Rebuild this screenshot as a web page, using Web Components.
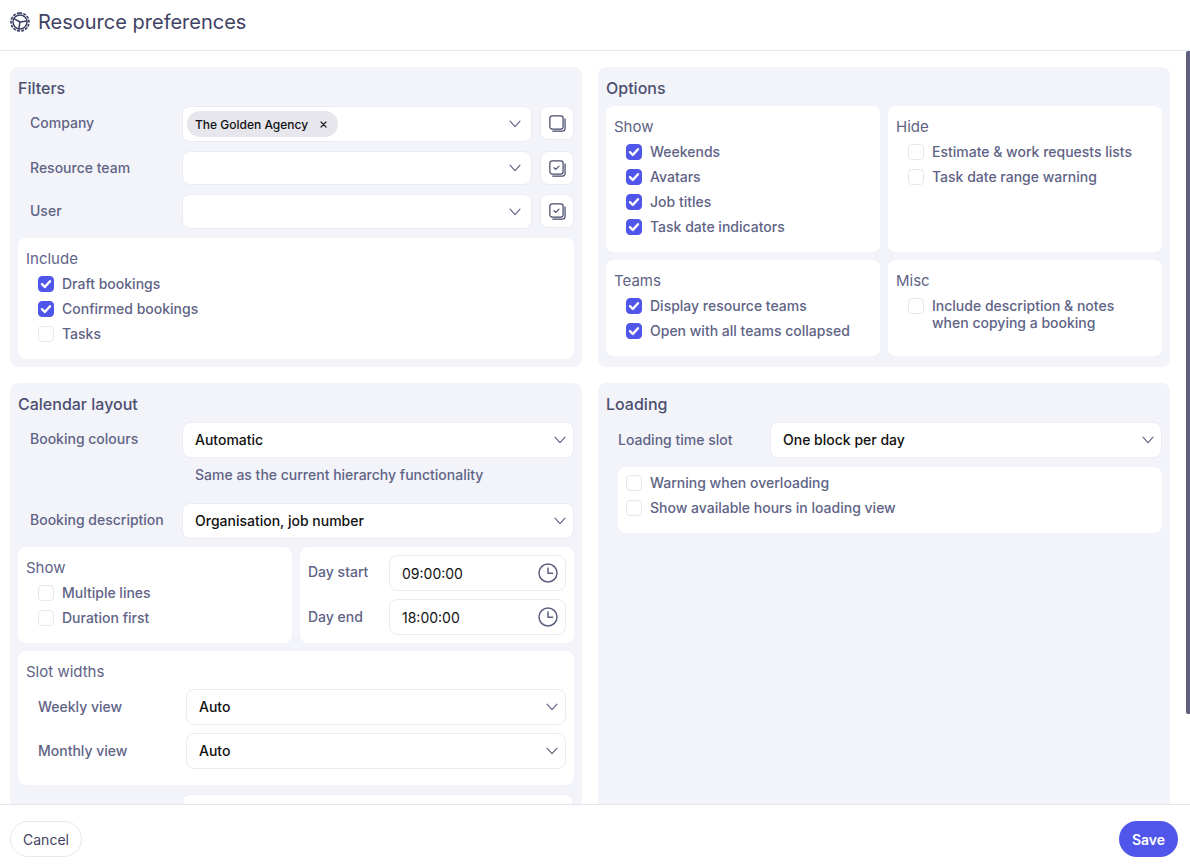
<!DOCTYPE html>
<html>
<head>
<meta charset="utf-8">
<title>Resource preferences</title>
<style>
  html, body { margin: 0; height: 100%; }
  body { font-family: Inter, "Liberation Sans", sans-serif; font-size: 14px; color: #5c5f7e; background: #fff; overflow: hidden; }
</style>
</head>
<body>
<prefs-page>
  <span slot="title">Resource preferences</span>

  <pref-panel slot="left" heading="Filters" style="height:300px">
    <pref-row label="Company" gap="9">
      <pref-select arrow="far" h="36"><pref-chip>The Golden Agency</pref-chip></pref-select>
      <pref-iconbtn></pref-iconbtn>
    </pref-row>
    <pref-row label="Resource team" gap="9">
      <pref-select arrow="far" h="34"></pref-select>
      <pref-iconbtn checked></pref-iconbtn>
    </pref-row>
    <pref-row label="User" gap="9">
      <pref-select arrow="far" h="35"></pref-select>
      <pref-iconbtn checked></pref-iconbtn>
    </pref-row>
    <pref-card heading="Include" style="height:121px">
      <pref-check checked>Draft bookings</pref-check>
      <pref-check checked>Confirmed bookings</pref-check>
      <pref-check>Tasks</pref-check>
    </pref-card>
  </pref-panel>

  <pref-panel slot="right" heading="Options" style="height:300px">
    <div style="display:grid;grid-template-columns:274px 274px;gap:8px;grid-template-rows:146px 96px">
      <pref-card heading="Show">
        <pref-check checked>Weekends</pref-check>
        <pref-check checked>Avatars</pref-check>
        <pref-check checked>Job titles</pref-check>
        <pref-check checked>Task date indicators</pref-check>
      </pref-card>
      <pref-card heading="Hide">
        <pref-check>Estimate &amp; work requests lists</pref-check>
        <pref-check>Task date range warning</pref-check>
      </pref-card>
      <pref-card heading="Teams">
        <pref-check checked>Display resource teams</pref-check>
        <pref-check checked>Open with all teams collapsed</pref-check>
      </pref-card>
      <pref-card heading="Misc">
        <pref-check>Include description &amp; notes<br>when copying a booking</pref-check>
      </pref-card>
    </div>
  </pref-panel>

  <pref-panel slot="left" heading="Calendar layout" style="height:508px">
    <pref-row label="Booking colours">
      <pref-select value="Automatic"></pref-select>
    </pref-row>
    <pref-hint>Same as the current hierarchy functionality</pref-hint>
    <pref-row label="Booking description">
      <pref-select value="Organisation, job number"></pref-select>
    </pref-row>
    <div style="display:grid;grid-template-columns:274px 274px;gap:8px">
      <pref-card heading="Show" style="height:96px">
        <pref-check>Multiple lines</pref-check>
        <pref-check>Duration first</pref-check>
      </pref-card>
      <pref-card style="height:96px" flush>
        <pref-time label="Day start" ptop="8" value="09:00:00"></pref-time>
        <pref-time label="Day end" ptop="9" value="18:00:00"></pref-time>
      </pref-card>
    </div>
    <pref-card heading="Slot widths" style="height:134px;margin-top:8px;margin-bottom:9px">
      <pref-row label="Weekly view" narrow style="margin-top:6px"><pref-select value="Auto"></pref-select></pref-row>
      <pref-row label="Monthly view" narrow><pref-select value="Auto"></pref-select></pref-row>
    </pref-card>
    <pref-row label="">
      <pref-select></pref-select>
    </pref-row>
  </pref-panel>

  <pref-panel slot="right" heading="Loading">
    <pref-row label="Loading time slot" ptop="9">
      <pref-select value="One block per day"></pref-select>
    </pref-row>
    <pref-card style="height:66px;padding-top:7px;margin:9px 0 0 12px">
      <pref-check flat>Warning when overloading</pref-check>
      <pref-check flat>Show available hours in loading view</pref-check>
    </pref-card>
  </pref-panel>
</prefs-page>

<script>
const CHEVRON = `<svg width="14" height="14" viewBox="0 0 14 14" fill="none" stroke="#5c5f7e" stroke-width="1.1" stroke-linecap="round" stroke-linejoin="round"><path d="M2 4.2 7 9.6 12 4.2"/></svg>`;

class PrefsPage extends HTMLElement {
  constructor() {
    super();
    this.attachShadow({ mode: "open" });
    this.shadowRoot.innerHTML = `
      <style>
        :host { display: flex; flex-direction: column; height: 868px; }
        header { flex: none; height: 44px; padding: 0 10px 6px; border-bottom: 1px solid #e6e6ef; display: flex; align-items: center; gap: 8px; }
        header svg { display: block; flex: none; }
        h1 { margin: 0; font-size: 20px; font-weight: 400; color: #3f4264; line-height: 28px; }
        .wrap { flex: 1; min-height: 0; position: relative; }
        main { height: 100%; overflow: hidden; padding: 16px 0 16px 10px; box-sizing: border-box; }
        .thumb { position: absolute; top: 0; right: 0; width: 4px; height: 663px; background: #5f6080; border-radius: 2px 0 0 2px; }
        .cols { display: grid; grid-template-columns: 572px 572px; gap: 16px; }
        footer { flex: none; height: 64px; border-top: 1px solid #e6e6ef; display: flex; align-items: center; justify-content: space-between; padding: 5px 12px 0 10px; box-sizing: border-box; }
        button { font: inherit; height: 36px; border-radius: 18px; cursor: pointer; }
        .cancel { background: #fff; border: 1px solid #e6e6ef; color: #3f4264; width: 72px; padding: 0; }
        .save { background: #5056ea; border: 0; color: #fff; font-weight: 600; width: 59px; padding: 0; }
      </style>
      <header>
        <svg width="20" height="20" viewBox="0 0 20 20" fill="none" stroke="#3f4264" stroke-width="1.5" stroke-linecap="round">
          <circle cx="10" cy="10" r="7"/>
          <path d="M10 10 3.8 6.6M10 10 17 9M10 10 8.8 17"/>
          <path stroke-width="1.7" stroke-dasharray="1.5 2.6" d="M10 1a9 9 0 1 1-.01 0"/>
        </svg>
        <h1><slot name="title"></slot></h1>
      </header>
      <div class="wrap">
        <main><div class="cols"><slot name="left"></slot><slot name="right"></slot></div></main>
        <div class="thumb"></div>
      </div>
      <footer><button class="cancel">Cancel</button><button class="save">Save</button></footer>`;
  }
  connectedCallback() {
    // pair panels row by row: first left+right, then second left+right
    const left = [...this.querySelectorAll('[slot="left"]')];
    const right = [...this.querySelectorAll('[slot="right"]')];
    left.forEach((el, i) => {
      el.style.gridColumn = "1"; el.style.gridRow = String(i + 1);
      right[i].style.gridColumn = "2"; right[i].style.gridRow = String(i + 1);
    });
    this.shadowRoot.querySelector(".cols").querySelectorAll("slot").forEach(s => s.style.display = "contents");
  }
}

class PrefPanel extends HTMLElement {
  constructor() {
    super();
    this.attachShadow({ mode: "open" });
  }
  connectedCallback() {
    this.shadowRoot.innerHTML = `
      <style>
        :host { display: block; background: #f3f4fa; border-radius: 8px; padding: 10px 8px 8px; box-sizing: border-box; }
        h2 { margin: 0 0 7px; font-size: 16px; font-weight: 500; line-height: 22px; color: #4c4f70; }
      </style>
      <h2>${this.getAttribute("heading")}</h2>
      <slot></slot>`;
  }
}

class PrefCard extends HTMLElement {
  constructor() {
    super();
    this.attachShadow({ mode: "open" });
  }
  connectedCallback() {
    const h = this.getAttribute("heading");
    this.shadowRoot.innerHTML = `
      <style>
        :host { display: block; background: #fff; border-radius: 8px; padding: ${this.hasAttribute("flush") ? "8px" : "11px 8px 8px"}; box-sizing: border-box; }
        h3 { margin: 0 0 5px; font-size: 15px; font-weight: 420; line-height: 20px; padding-bottom: 1px; color: #606385; }
      </style>
      ${h ? `<h3>${h}</h3>` : ""}
      <slot></slot>`;
  }
}

class PrefRow extends HTMLElement {
  constructor() {
    super();
    this.attachShadow({ mode: "open" });
  }
  connectedCallback() {
    const narrow = this.hasAttribute("narrow");
    const ptop = this.getAttribute("ptop") || (narrow ? 9 : 8);
    this.shadowRoot.innerHTML = `
      <style>
        :host { display: flex; gap: 8px; margin-bottom: ${this.getAttribute("gap") || 8}px; align-items: flex-start; }
        label { flex: none; width: ${narrow ? 140 : 144}px; padding: ${ptop}px 0 0 12px; font-size: 14px; font-weight: 450; line-height: 17px; color: #606385; }
        ::slotted(pref-select) { flex: 1; min-width: 0; }
      </style>
      <label>${this.getAttribute("label")}</label>
      <slot></slot>`;
  }
}

class PrefSelect extends HTMLElement {
  constructor() {
    super();
    this.attachShadow({ mode: "open" });
  }
  connectedCallback() {
    const far = this.getAttribute("arrow") === "far";
    const value = this.getAttribute("value") || "";
    this.shadowRoot.innerHTML = `
      <style>
        :host { display: block; }
        .box { height: ${this.getAttribute("h") || 36}px; box-sizing: border-box; background: #fff; border: 1px solid #ebebf3; border-radius: 8px; display: flex; align-items: center; padding: 0 ${far ? 9 : 6}px 0 ${value ? 12 : 4}px; }
        .val { flex: 1; min-width: 0; color: #111; font-size: 14px; font-weight: 480; ${value ? "padding-bottom: 2px;" : ""} }
        svg { flex: none; display: block; }
      </style>
      <div class="box"><div class="val">${value}<slot></slot></div>${CHEVRON}</div>`;
  }
}

class PrefChip extends HTMLElement {
  constructor() {
    super();
    this.attachShadow({ mode: "open" });
    this.shadowRoot.innerHTML = `
      <style>
        :host { display: inline-flex; align-items: center; height: 26px; background: #e6e6ec; border-radius: 13px; padding: 0 11px 0 8px; font-size: 12px; font-weight: 500; color: #111; gap: 12px; }
        svg { display: block; }
      </style>
      <slot></slot>
      <svg width="7" height="7" viewBox="0 0 7 7" stroke="#222" stroke-width="1.2" stroke-linecap="round"><path d="M1 1l5 5M6 1 1 6"/></svg>`;
  }
}

class PrefIconbtn extends HTMLElement {
  constructor() {
    super();
    this.attachShadow({ mode: "open" });
  }
  connectedCallback() {
    const tick = this.hasAttribute("checked") ? `<path d="M5.2 8.2 7.2 10l3.4-3.6" stroke-width="1.2"/>` : "";
    this.shadowRoot.innerHTML = `
      <style>
        :host { display: flex; flex: none; width: 34px; height: 34px; box-sizing: border-box; background: #fff; border: 1px solid #ebebf3; border-radius: 8px; align-items: center; justify-content: center; }
        svg { display: block; }
      </style>
      <svg width="17" height="17" viewBox="0 0 18 18" fill="none" stroke="#474a6b" stroke-width="1.3" stroke-linecap="round" stroke-linejoin="round">
        <rect x=".9" y=".9" width="14" height="14" rx="2.4"/>
        <path d="M17 4v10.4a2.6 2.6 0 0 1-2.6 2.6H4" />
        ${tick}
      </svg>`;
  }
}

class PrefCheck extends HTMLElement {
  constructor() {
    super();
    this.attachShadow({ mode: "open" });
  }
  connectedCallback() {
    const on = this.hasAttribute("checked");
    this.shadowRoot.innerHTML = `
      <style>
        :host { display: flex; gap: 8px; padding-left: ${this.hasAttribute("flat") ? 0 : 12}px; min-height: 25px; font-size: 14px; font-weight: 450; line-height: 17px; color: #606385; }
        .box { flex: none; width: 16px; height: 16px; margin-top: 1px; box-sizing: border-box; border-radius: 4px; border: 1px solid ${on ? "#5056ea" : "#e6e6ef"}; background: ${on ? "#5056ea" : "#fff"}; display: flex; align-items: center; justify-content: center; }
        svg { display: block; }
      </style>
      <span class="box">${on ? `<svg width="12" height="12" viewBox="0 0 12 12" fill="none" stroke="#fff" stroke-width="2.4" stroke-linecap="round" stroke-linejoin="round"><path d="M2 6.2 4.8 9 10 3.2"/></svg>` : ""}</span>
      <span><slot></slot></span>`;
  }
}

class PrefHint extends HTMLElement {
  constructor() {
    super();
    this.attachShadow({ mode: "open" });
    this.shadowRoot.innerHTML = `
      <style>
        :host { display: block; padding: 0 0 20px 177px; font-size: 14px; font-weight: 450; line-height: 17px; color: #606385; }
      </style>
      <slot></slot>`;
  }
}

class PrefTime extends HTMLElement {
  constructor() {
    super();
    this.attachShadow({ mode: "open" });
  }
  connectedCallback() {
    this.shadowRoot.innerHTML = `
      <style>
        :host { display: flex; margin-bottom: 8px; }
        label { flex: none; width: 81px; padding-top: ${this.getAttribute("ptop") || 9}px; line-height: 17px; font-size: 14px; font-weight: 450; color: #606385; }
        .box { flex: 1; height: 36px; box-sizing: border-box; border: 1px solid #ebebf3; border-radius: 8px; background: #fff; display: flex; align-items: center; justify-content: space-between; padding: 0 7px 0 12px; color: #111; font-weight: 420; }
        svg { display: block; }
      </style>
      <label>${this.getAttribute("label")}</label>
      <div class="box"><span>${this.getAttribute("value")}</span>
        <svg width="20" height="20" viewBox="0 0 20 20" fill="none" stroke="#5c5f7e" stroke-width="1.5" stroke-linecap="round" stroke-linejoin="round"><circle cx="10" cy="10" r="9"/><path d="M10 5v5.2h4.6"/></svg>
      </div>`;
  }
}

customElements.define("prefs-page", PrefsPage);
customElements.define("pref-panel", PrefPanel);
customElements.define("pref-card", PrefCard);
customElements.define("pref-row", PrefRow);
customElements.define("pref-select", PrefSelect);
customElements.define("pref-chip", PrefChip);
customElements.define("pref-iconbtn", PrefIconbtn);
customElements.define("pref-check", PrefCheck);
customElements.define("pref-hint", PrefHint);
customElements.define("pref-time", PrefTime);
</script>
</body>
</html>
